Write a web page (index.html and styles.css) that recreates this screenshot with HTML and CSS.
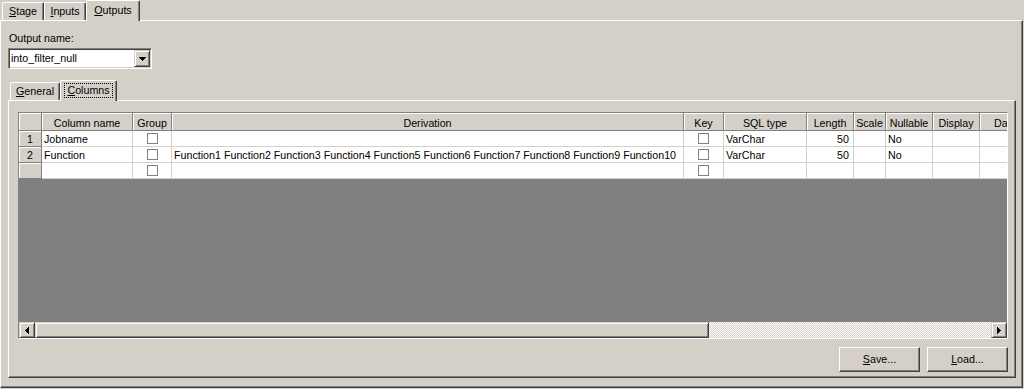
FILE: index.html
```html
<!DOCTYPE html>
<html>
<head>
<meta charset="utf-8">
<link rel="stylesheet" href="styles.css">
</head>
<body>
<div class="dialog">
  <div class="tabstrip outer-strip">
    <div class="tab w-stage"><u>S</u>tage</div>
    <div class="tab w-inputs"><u>I</u>nputs</div>
    <div class="tab active w-outputs"><u>O</u>utputs</div>
  </div>
  <div class="panel outer-panel">
    <div class="label">Output name:</div>
    <div class="combo">
      <span class="combo-text">into_filter_null</span>
      <span class="combo-btn">
        <svg width="7" height="4" viewBox="0 0 7 4"><rect x="0" y="0" width="7" height="1"/><rect x="1" y="1" width="5" height="1"/><rect x="2" y="2" width="3" height="1"/><rect x="3" y="3" width="1" height="1"/></svg>
      </span>
    </div>
    <div class="tabstrip inner-strip">
      <div class="tab w-general"><u>G</u>eneral</div>
      <div class="tab active w-columns"><span class="focus"><u>C</u>olumns</span></div>
    </div>
    <div class="panel inner-panel">
      <div class="grid">
        <div class="view">
          <div class="table">
            <div class="hd"></div>
            <div class="hd">Column name</div>
            <div class="hd">Group</div>
            <div class="hd">Derivation</div>
            <div class="hd">Key</div>
            <div class="hd">SQL type</div>
            <div class="hd">Length</div>
            <div class="hd">Scale</div>
            <div class="hd">Nullable</div>
            <div class="hd">Display</div>
            <div class="hd hd-last">Da</div>

            <div class="rn">1</div>
            <div class="cell">Jobname</div>
            <div class="cell chk"><span class="box"></span></div>
            <div class="cell"></div>
            <div class="cell chk"><span class="box"></span></div>
            <div class="cell">VarChar</div>
            <div class="cell num">50</div>
            <div class="cell"></div>
            <div class="cell">No</div>
            <div class="cell"></div>
            <div class="cell"></div>

            <div class="rn">2</div>
            <div class="cell">Function</div>
            <div class="cell chk"><span class="box"></span></div>
            <div class="cell">Function1 Function2 Function3 Function4 Function5 Function6 Function7 Function8 Function9 Function10</div>
            <div class="cell chk"><span class="box"></span></div>
            <div class="cell">VarChar</div>
            <div class="cell num">50</div>
            <div class="cell"></div>
            <div class="cell">No</div>
            <div class="cell"></div>
            <div class="cell"></div>

            <div class="rn"></div>
            <div class="cell"></div>
            <div class="cell chk"><span class="box"></span></div>
            <div class="cell"></div>
            <div class="cell chk"><span class="box"></span></div>
            <div class="cell"></div>
            <div class="cell"></div>
            <div class="cell"></div>
            <div class="cell"></div>
            <div class="cell"></div>
            <div class="cell"></div>
          </div>
        </div>
        <div class="hscroll">
          <span class="sb-btn">
            <svg width="4" height="7" viewBox="0 0 4 7"><rect x="3" y="0" width="1" height="7"/><rect x="2" y="1" width="1" height="5"/><rect x="1" y="2" width="1" height="3"/><rect x="0" y="3" width="1" height="1"/></svg>
          </span>
          <span class="sb-thumb"></span>
          <span class="sb-track"></span>
          <span class="sb-btn">
            <svg width="4" height="7" viewBox="0 0 4 7"><rect x="0" y="0" width="1" height="7"/><rect x="1" y="1" width="1" height="5"/><rect x="2" y="2" width="1" height="3"/><rect x="3" y="3" width="1" height="1"/></svg>
          </span>
        </div>
      </div>
      <div class="btns">
        <div class="btn"><u>S</u>ave...</div>
        <div class="btn"><u>L</u>oad...</div>
      </div>
    </div>
  </div>
</div>
</body>
</html>
```

FILE: styles.css
```css
* { box-sizing: border-box; }
html, body { margin: 0; padding: 0; }
body {
  background: #d4d0c8;
  font-family: "Liberation Sans", Arial, sans-serif;
  font-size: 10.7px;
  color: #000;
  width: 1024px;
  height: 389px;
  overflow: hidden;
}
u { text-decoration: underline; text-underline-offset: 1px; }

.dialog { display: flex; flex-direction: column; width: 1023px; }

.tabstrip { display: flex; align-items: flex-end; height: 20px; }
.outer-strip { padding-left: 2px; }
.inner-strip { margin-top: 11px; padding-left: 2px; }

.tab {
  height: 18px;
  border-top: 1px solid #fff;
  border-left: 1px solid #fff;
  border-right: 1px solid #404040;
  box-shadow: inset -1px 0 #808080;
  border-radius: 2px 2px 0 0;
  display: flex;
  justify-content: center;
  padding-top: 2px;
  line-height: 13px;
  white-space: nowrap;
}
.tab.active {
  height: 21px;
  margin-bottom: -1px;
  position: relative;
  z-index: 1;
  background: #d4d0c8;
  padding-top: 3px;
}
.w-stage { width: 42px; }
.w-inputs { width: 42px; }
.w-outputs { width: 54px; }
.w-general { width: 50px; }
.w-columns { width: 57px; }
.focus { outline: 1px dotted #000; outline-offset: 0; padding: 0 2px; height: 13px; }

.panel {
  border-top: 1px solid #fff;
  border-left: 1px solid #fff;
  border-right: 1px solid #404040;
  border-bottom: 1px solid #404040;
  box-shadow: inset -1px -1px #808080;
}
.outer-panel {
  width: 1023px;
  height: 368px;
  padding: 11px 0 0 7px;
}
.label { line-height: 13px; padding-left: 1px; }

.combo {
  margin-top: 3px;
  width: 144px;
  height: 21px;
  background: #fff;
  border-top: 1px solid #808080;
  border-left: 1px solid #808080;
  border-bottom: 1px solid #fff;
  border-right: 1px solid #fff;
  box-shadow: inset 1px 1px #404040, inset -1px -1px #d4d0c8;
  display: flex;
  align-items: center;
}
.combo-text { flex: 1; padding-left: 2px; line-height: 13px; }
.combo-btn {
  width: 16px;
  height: 17px;
  margin-right: 1px;
  background: #d4d0c8;
  border-top: 1px solid #d4d0c8;
  border-left: 1px solid #d4d0c8;
  border-right: 1px solid #404040;
  border-bottom: 1px solid #404040;
  box-shadow: inset 1px 1px #fff, inset -1px -1px #808080;
  display: flex;
  align-items: center;
  justify-content: center;
}
.combo-btn svg, .sb-btn svg { display: block; fill: #000; }

.inner-panel {
  width: 1008px;
  height: 278px;
  padding: 11px 0 0 9px;
}

.grid {
  width: 990px;
  height: 227px;
  border-top: 1px solid #808080;
  border-left: 1px solid #808080;
  border-right: 1px solid #fff;
  border-bottom: 1px solid #fff;
  display: flex;
  flex-direction: column;
}
.view {
  height: 209px;
  background: #808080;
  overflow: hidden;
}
.table {
  display: grid;
  grid-template-columns: 23px 91px 39px 512px 40px 83px 47px 32px 47px 47px 28px;
  grid-template-rows: 18px;
  grid-auto-rows: 16px;
  width: max-content;
}
.hd, .rn {
  background: #d4d0c8;
  border-right: 1px solid #808080;
  border-bottom: 1px solid #808080;
  box-shadow: inset 1px 1px #fff;
  text-align: center;
  white-space: nowrap;
  overflow: hidden;
}
.hd { padding-top: 3px; line-height: 14px; }
.hd-last { border-right: 0; text-align: left; padding-left: 14px; }
.rn { padding-top: 1px; line-height: 14px; }
.cell {
  background: #fff;
  border-right: 1px solid #d4d0c8;
  border-bottom: 1px solid #d4d0c8;
  padding: 1px 0 0 2px;
  line-height: 14px;
  white-space: nowrap;
  overflow: hidden;
}
.table > .cell:nth-child(11n) { border-right: 0; }
.cell.num { text-align: right; padding-right: 4px; }
.cell.chk { display: flex; justify-content: center; align-items: flex-start; padding: 2px 0 0 0; }
.box { width: 11px; height: 11px; border: 1px solid #808080; background: #fff; }

.hscroll { height: 16px; display: flex; }
.sb-btn, .sb-thumb {
  background: #d4d0c8;
  border-top: 1px solid #d4d0c8;
  border-left: 1px solid #d4d0c8;
  border-right: 1px solid #404040;
  border-bottom: 1px solid #404040;
  box-shadow: inset 1px 1px #fff, inset -1px -1px #808080;
}
.sb-btn { width: 16px; height: 16px; display: flex; align-items: center; justify-content: center; }
.sb-thumb { width: 674px; height: 16px; }
.sb-track {
  flex: 1;
  height: 16px;
  background: repeating-conic-gradient(#fff 0 25%, #d4d0c8 0 50%) 0 0 / 2px 2px;
}

.btns {
  width: 990px;
  margin-top: 8px;
  display: flex;
  justify-content: flex-end;
  gap: 7px;
}
.btn {
  width: 81px;
  height: 25px;
  background: #d4d0c8;
  border-top: 1px solid #fff;
  border-left: 1px solid #fff;
  border-right: 1px solid #404040;
  border-bottom: 1px solid #404040;
  box-shadow: inset -1px -1px #808080;
  display: flex;
  align-items: center;
  justify-content: center;
  line-height: 13px;
}
```
